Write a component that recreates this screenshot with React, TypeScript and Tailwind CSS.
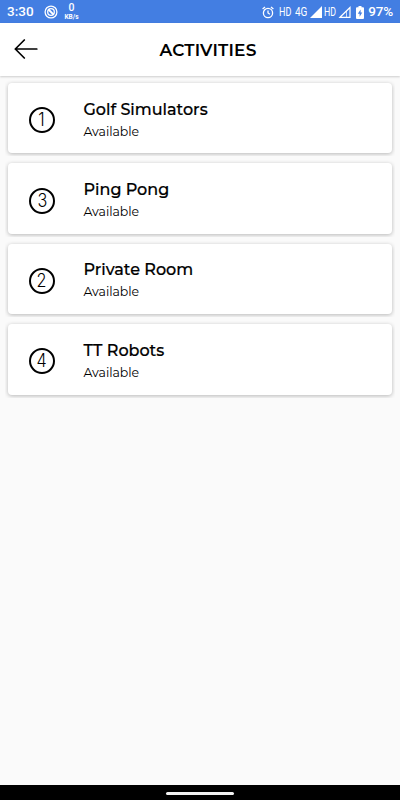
import { ReactNode } from 'react';

type Activity = {
  number: number;
  name: string;
  status: string;
};

const activities: Activity[] = [
  { number: 1, name: 'Golf Simulators', status: 'Available' },
  { number: 3, name: 'Ping Pong', status: 'Available' },
  { number: 2, name: 'Private Room', status: 'Available' },
  { number: 4, name: 'TT Robots', status: 'Available' },
];

function StatusBar() {
  return (
    <div className="flex h-[22.5px] shrink-0 items-center bg-[#437ee2] pt-[1.500px] pr-[7px] pl-[7px] font-[Roboto,sans-serif] text-white">
      <span className="w-[36.5px] text-[13.5px] leading-none font-medium">3:30</span>
      <svg className="h-[14px] w-[14px]" viewBox="0 0 14 14" fill="none" stroke="currentColor">
        <circle cx="7" cy="7" r="5.9" strokeWidth="1.3" />
        <circle cx="7" cy="7" r="3.3" strokeWidth="1.3" />
        <path d="M4.5 4.5l5 5" strokeWidth="1.8" />
      </svg>
      <div className="ml-[6px] flex w-[16px] flex-col items-center">
        <span className="text-[10.5px] leading-[10px] font-medium">0</span>
        <span className="text-[6.5px] leading-[8px] font-bold whitespace-nowrap">KB/s</span>
      </div>
      <div className="ml-auto flex items-center">
        <svg className="h-[13px] w-[12px]" viewBox="0 0 12 13" fill="none" stroke="currentColor" strokeWidth="1.3">
          <circle cx="6" cy="7" r="4.6" />
          <path d="M6 4.5V7l1.9 1.2M.6 3 3 1M11.4 3 9 1" />
        </svg>
        <span className="ml-[5px] w-[16px] origin-left scale-x-[0.75] text-[12px] leading-none">HD</span>
        <span className="w-[15px] origin-left scale-x-[0.83] text-[12px] leading-none">4G</span>
        <svg className="h-[12px] w-[12px]" viewBox="0 0 12 12" fill="currentColor">
          <path d="M0 12 12 0v12z" />
        </svg>
        <span className="ml-[2px] w-[14px] origin-left scale-x-[0.73] text-[12px] leading-none">HD</span>
        <svg className="h-[12px] w-[13px]" viewBox="0 0 13 12" fill="none" stroke="currentColor">
          <path d="M2 11.300 12 1.500v9.800z" strokeWidth="1.2" />
          <path d="M8.500 5V11" strokeWidth="0.7" />
        </svg>
        <svg className="ml-[5px] h-[13px] w-[8px]" viewBox="0 0 8 13">
          <path d="M2.5 0h3v1.2H7q1 0 1 1V12q0 1-1 1H1q-1 0-1-1V2.2q0-1 1-1h1.500z" fill="currentColor" />
          <path d="M4.6 3.500 1.800 7.700h1.800v3L6.300 6.500H4.600z" fill="#437ee2" />
        </svg>
        <span className="ml-[4px] text-[13.5px] leading-none font-medium tracking-[-0.2px]">97%</span>
      </div>
    </div>
  );
}

function Header({ children }: { children: ReactNode }) {
  return (
    <header className="relative flex h-[53px] shrink-0 items-center bg-white px-[14px] shadow-[0_1px_2px_rgba(0,0,0,0.18)]">
      <button aria-label="Back">
        <svg
          className="h-[20px] w-[24px]"
          viewBox="0 0 24 20"
          fill="none"
          stroke="currentColor"
          strokeWidth="1.7"
          strokeLinecap="round"
          strokeLinejoin="round"
        >
          <path d="M10.300 1 1.300 10l9 9M1.300 10h21.500" />
        </svg>
      </button>
      <h1 className="flex-1 pt-[2px] pr-[8px] text-center text-[17px] leading-none font-semibold tracking-[0.2px]">
        {children}
      </h1>
    </header>
  );
}

function ActivityCard({ number, name, status }: Activity) {
  return (
    <li className="h-[76.4px] overflow-hidden p-[3px]">
      <div className="flex h-[70.4px] items-center rounded-[4px] bg-white pt-[4px] pl-[21px] shadow-[0_1px_4px_rgba(0,0,0,0.27)]">
        <div className="flex h-[26px] w-[26px] items-center justify-center rounded-full border-2 border-black font-[Inter,sans-serif] text-[18px] leading-none font-light">
          <span className="scale-x-[0.9]">{number}</span>
        </div>
        <div className="ml-[28.500px] flex flex-col pt-px">
          <span className="text-[16px] leading-[22px] font-medium [-webkit-text-stroke:0.2px]">{name}</span>
          <span className="text-[12.5px] leading-[22px] tracking-[-0.050px]">{status}</span>
        </div>
      </div>
    </li>
  );
}

export default function App() {
  return (
    <div className="flex h-[800px] w-[400px] flex-col overflow-hidden bg-[#fafafa] font-[Montserrat,Inter,sans-serif] text-black">
      <StatusBar />
      <Header>ACTIVITIES</Header>
      <ul className="flex flex-1 flex-col gap-[4px] px-[5px] pt-[4.500px]">
        {activities.map((activity) => (
          <ActivityCard key={activity.number} {...activity} />
        ))}
      </ul>
      <div className="flex h-[15px] shrink-0 items-center justify-center bg-black pt-[2px]">
        <div className="h-[3px] w-[68px] rounded-full bg-[#f2f2f2]" />
      </div>
    </div>
  );
}
